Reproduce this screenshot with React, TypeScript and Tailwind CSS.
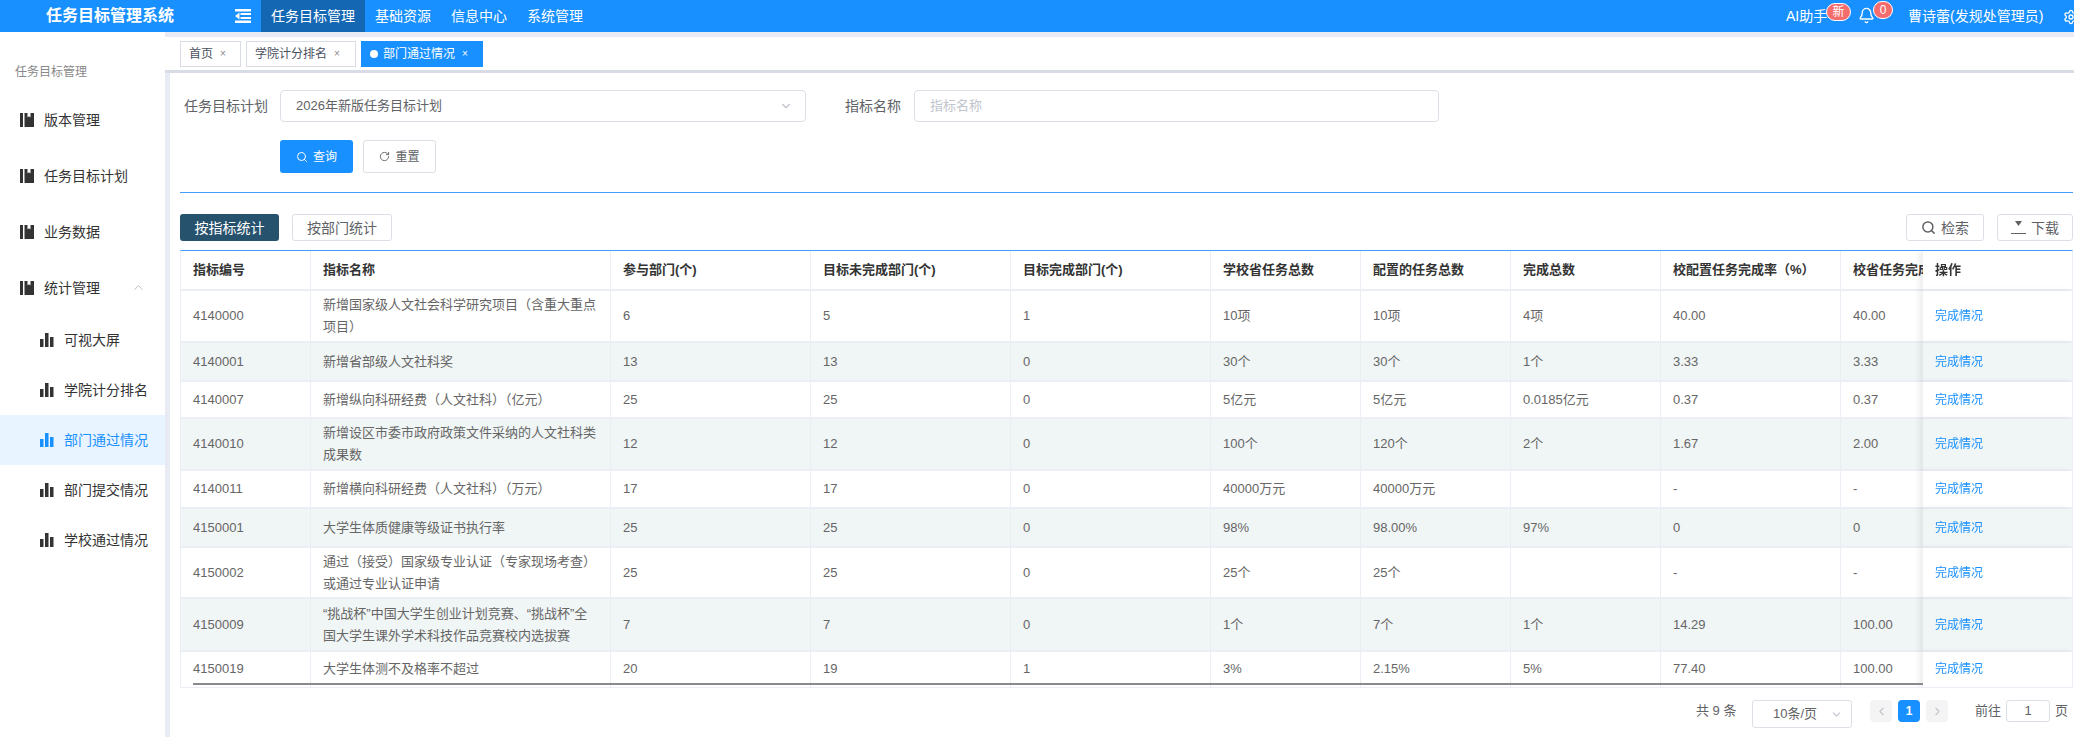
import { Bell, ChevronDown, ChevronLeft, ChevronRight, ChevronUp, RotateCw, Search, Settings } from 'lucide-react';

const TOP_NAV = ['任务目标管理', '基础资源', '信息中心', '系统管理'];

const COLUMNS = [
  { title: '指标编号', width: 'w-[130px]' },
  { title: '指标名称', width: 'w-[300px]' },
  { title: '参与部门(个)', width: 'w-[200px]' },
  { title: '目标未完成部门(个)', width: 'w-[200px]' },
  { title: '目标完成部门(个)', width: 'w-[200px]' },
  { title: '学校省任务总数', width: 'w-[150px]' },
  { title: '配置的任务总数', width: 'w-[150px]' },
  { title: '完成总数', width: 'w-[150px]' },
  { title: '校配置任务完成率（%）', width: 'w-[180px]' },
  { title: '校省任务完成率（%）', width: 'w-[180px]' },
];

const ROWS = [
  { h: 'h-[52px]', cells: ['4140000', '新增国家级人文社会科学研究项目（含重大重点项目）', '6', '5', '1', '10项', '10项', '4项', '40.00', '40.00'] },
  { h: 'h-[39px]', cells: ['4140001', '新增省部级人文社科奖', '13', '13', '0', '30个', '30个', '1个', '3.33', '3.33'] },
  { h: 'h-[37px]', cells: ['4140007', '新增纵向科研经费（人文社科）（亿元）', '25', '25', '0', '5亿元', '5亿元', '0.0185亿元', '0.37', '0.37'] },
  { h: 'h-[52px]', cells: ['4140010', '新增设区市委市政府政策文件采纳的人文社科类成果数', '12', '12', '0', '100个', '120个', '2个', '1.67', '2.00'] },
  { h: 'h-[38px]', cells: ['4140011', '新增横向科研经费（人文社科）（万元）', '17', '17', '0', '40000万元', '40000万元', '', '-', '-'] },
  { h: 'h-[39px]', cells: ['4150001', '大学生体质健康等级证书执行率', '25', '25', '0', '98%', '98.00%', '97%', '0', '0'] },
  { h: 'h-[51px]', cells: ['4150002', '通过（接受）国家级专业认证（专家现场考查）或通过专业认证申请', '25', '25', '0', '25个', '25个', '', '-', '-'] },
  { h: 'h-[53px]', cells: ['4150009', '“挑战杯”中国大学生创业计划竞赛、“挑战杯”全国大学生课外学术科技作品竞赛校内选拔赛', '7', '7', '0', '1个', '7个', '1个', '14.29', '100.00'] },
  { h: 'h-[36px]', cells: ['4150019', '大学生体测不及格率不超过', '20', '19', '1', '3%', '2.15%', '5%', '77.40', '100.00'] },
];

function BookIcon() {
  return (
    <svg width="14" height="14" viewBox="0 0 14 14" className="shrink-0" fill="currentColor">
      <rect x="0" y="0" width="3" height="14" />
      <path d="M4.500 0H7.500V4.500L9 3.200 10.500 4.500V0H14V14H4.500z" />
    </svg>
  );
}

function BarsIcon() {
  return (
    <svg width="14" height="14" viewBox="0 0 14 14" className="shrink-0" fill="currentColor">
      <rect x="0" y="6" width="3.500" height="8" />
      <rect x="5" y="0" width="3.500" height="14" />
      <rect x="10" y="4" width="3.500" height="10" />
    </svg>
  );
}

function MenuIcon() {
  return (
    <svg width="16" height="14" viewBox="0 0 16 14" fill="white" className="shrink-0">
      <rect x="0" y="0" width="16" height="2.500" />
      <rect x="5.500" y="4" width="10.500" height="2" />
      <rect x="5.500" y="8" width="10.500" height="2" />
      <rect x="0" y="11.500" width="16" height="2.500" />
      <path d="M4.500 3.500v7L0 7z" />
    </svg>
  );
}

function Header() {
  return (
    <header className="h-8 bg-[#1890ff] flex items-center text-white text-sm">
      <div className="w-[235px] pl-[46px] text-base font-bold">任务目标管理系统</div>
      <MenuIcon />
      <nav className="flex ml-[10px] h-full">
        {TOP_NAV.map((item, i) => (
          <div key={item} className={`px-[10px] flex items-center ${i === 0 ? 'bg-[#1467b3]' : ''}`}>{item}</div>
        ))}
      </nav>
      <div className="ml-auto flex items-center h-full relative w-[288px]">
        <span>AI助手</span>
        <span className="absolute left-[40px] top-[3px] w-[25px] h-[18px] rounded-[9px] bg-[#f56c6c] border border-white text-xs flex items-center justify-center">新</span>
        <Bell className="absolute left-[72px] top-[7px] w-[17px] h-[17px]" strokeWidth={1.9} />
        <span className="absolute left-[87px] top-[1px] w-[20px] h-[18px] rounded-[9px] bg-[#f56c6c] border border-white text-xs flex items-center justify-center">0</span>
        <span className="absolute left-[122px]">曹诗蕾(发规处管理员)</span>
        <Settings className="absolute left-[277px] top-[9px] w-[16px] h-[16px]" strokeWidth={2} />
      </div>
    </header>
  );
}

function Sidebar() {
  const top = ['版本管理', '任务目标计划', '业务数据'];
  const sub = ['可视大屏', '学院计分排名', '部门通过情况', '部门提交情况', '学校通过情况'];
  return (
    <aside className="w-[165px] shrink-0 bg-white text-sm text-[#333]">
      <div className="h-[60px] pl-[15px] pt-[31px] text-xs text-[#888] leading-[18px]">任务目标管理</div>
      {top.map(item => (
        <div key={item} className="h-[56px] flex items-center pl-[20px] gap-[10px]">
          <BookIcon />
          <span>{item}</span>
        </div>
      ))}
      <div className="h-[55px] flex items-center pl-[20px] gap-[10px]">
        <BookIcon />
        <span>统计管理</span>
        <ChevronUp className="w-[15px] h-[15px] text-[#bbb] ml-[21px]" strokeWidth={1.5} />
      </div>
      {sub.map(item => (
        <div
          key={item}
          className={`h-[50px] flex items-center pl-[40px] gap-[10px] ${item === '部门通过情况' ? 'bg-[#e8f4ff] text-[#1890ff]' : ''}`}
        >
          <BarsIcon />
          <span>{item}</span>
        </div>
      ))}
    </aside>
  );
}

function Tabs() {
  return (
    <div className="h-[33px] mt-[5px] bg-white flex items-center gap-[5px] pl-[15px] shadow-[0_3px_0_#d8dce5] text-xs text-[#495060]">
      <div className="h-[26px] w-[61px] border border-[#d8dce5] flex items-center pl-[8px]">
        首页<span className="ml-[7px] text-[10px] text-[#888]">×</span>
      </div>
      <div className="h-[26px] w-[110px] border border-[#d8dce5] flex items-center pl-[8px]">
        学院计分排名<span className="ml-[7px] text-[10px] text-[#888]">×</span>
      </div>
      <div className="h-[26px] w-[122px] bg-[#1890ff] text-white flex items-center pl-[9px]">
        <span className="w-[8px] h-[8px] rounded-full bg-white mr-[5px]" />
        部门通过情况<span className="ml-[7px] text-[10px]">×</span>
      </div>
    </div>
  );
}

function FilterForm() {
  return (
    <div className="pl-[4px] text-[#606266]">
      <div className="flex items-center h-8">
        <label className="w-[96px] text-sm">任务目标计划</label>
        <div className="w-[526px] h-8 border border-[#dcdfe6] rounded flex items-center pl-[15px] pr-[12px] text-[13px]">
          2026年新版任务目标计划
          <ChevronDown className="ml-auto w-[14px] h-[14px] text-[#c0c4cc]" />
        </div>
        <label className="ml-[39px] w-[69px] text-sm">指标名称</label>
        <div className="w-[525px] h-8 border border-[#dcdfe6] rounded flex items-center pl-[15px] text-[13px] text-[#c0c4cc]">指标名称</div>
      </div>
      <div className="flex gap-[10px] ml-[96px] mt-[18px]">
        <button className="w-[73px] h-[33px] rounded-[3px] bg-[#1890ff] text-white text-xs flex items-center justify-center gap-[5px]">
          <Search className="w-[12px] h-[12px]" />查询
        </button>
        <button className="w-[73px] h-[33px] rounded-[3px] border border-[#dcdfe6] text-xs flex items-center justify-center gap-[5px]">
          <RotateCw className="w-[11px] h-[11px]" />重置
        </button>
      </div>
    </div>
  );
}

function Toolbar() {
  return (
    <div className="flex items-center h-[27px] mt-[21px] text-sm">
      <div className="w-[99px] h-full rounded-[3px] bg-[#27526e] text-white flex items-center justify-center">按指标统计</div>
      <div className="w-[100px] h-full ml-[13px] rounded-[3px] border border-[#dcdfe6] text-[#606266] flex items-center justify-center">按部门统计</div>
      <div className="ml-auto w-[78px] h-full rounded-[3px] border border-[#dcdfe6] text-[#606266] flex items-center justify-center gap-[5px]">
        <Search className="w-[15px] h-[15px]" strokeWidth={2.4} />检索
      </div>
      <div className="ml-[13px] w-[76px] h-full rounded-[3px] border border-[#dcdfe6] text-[#606266] flex items-center justify-center gap-[5px]">
        <svg width="15" height="15" viewBox="0 0 15 15" fill="currentColor">
          <path d="M4 1h7L7.500 6z" />
          <rect x="0" y="13" width="15" height="1" />
        </svg>
        下载
      </div>
    </div>
  );
}

function DataTable() {
  return (
    <div className="relative mt-[9px] border-t border-t-[#409eff] border-b border-r border-l border-[#ebeef5] overflow-hidden text-[13px] leading-[22px] h-[438px]">
      <table className="table-fixed border-separate border-spacing-0 w-[1989px]">
        <colgroup>
          {COLUMNS.map(col => <col key={col.title} className={col.width} />)}
          <col className="w-[149px]" />
        </colgroup>
        <thead>
          <tr className="h-[40px]">
            {COLUMNS.map(col => (
              <th key={col.title} className="px-[12px] text-left font-bold text-[#333] whitespace-nowrap overflow-hidden border-r border-b-2 border-[#ebeef5] bg-white">{col.title}</th>
            ))}
            <th className="sticky right-0 px-[12px] text-left font-bold text-[#333] bg-white border-b-2 border-[#ebeef5] shadow-[-4px_0_6px_rgba(0,0,0,0.07)]">操作</th>
          </tr>
        </thead>
        <tbody>
          {ROWS.map((row, i) => {
            const bg = i % 2 === 1 ? 'bg-[#f0f5f5]' : 'bg-white';
            const isLast = i === ROWS.length - 1;
            const rowEdge = isLast ? 'pb-[3px]' : 'border-b-2 border-[#ebeef5]';
            return (
              <tr key={row.cells[0]} className={row.h}>
                {row.cells.map((cell, j) => (
                  <td key={j} className={`px-[12px] text-[#666] border-r border-r-[#ebeef5] ${rowEdge} ${bg}`}>{cell}</td>
                ))}
                <td className={`sticky right-0 px-[12px] text-xs text-[#1890ff] shadow-[-4px_0_6px_rgba(0,0,0,0.07)] ${rowEdge} ${bg}`}>完成情况</td>
              </tr>
            );
          })}
        </tbody>
      </table>
      <div className="absolute left-[12px] bottom-[2px] w-[1730px] h-[2px] bg-[#8a8a8a]" />
    </div>
  );
}

function Pagination() {
  return (
    <div className="flex items-start h-[28px] mt-[12px] text-[13px] text-[#606266] pl-[1516px]">
      <span className="w-[56px] leading-[22px]">共 9 条</span>
      <div className="w-[100px] h-[28px] border border-[#dcdfe6] rounded-[3px] flex items-center pl-[20px] pr-[8px]">
        10条/页<ChevronDown className="ml-auto w-[13px] h-[13px] text-[#c0c4cc]" />
      </div>
      <div className="ml-[18px] w-[22px] h-[22px] bg-[#f4f4f5] rounded-sm flex items-center justify-center text-[#c0c4cc]"><ChevronLeft className="w-[13px] h-[13px]" /></div>
      <div className="ml-[6px] w-[22px] h-[22px] bg-[#1890ff] rounded-sm flex items-center justify-center text-white font-bold text-xs">1</div>
      <div className="ml-[6px] w-[22px] h-[22px] bg-[#f4f4f5] rounded-sm flex items-center justify-center text-[#c0c4cc]"><ChevronRight className="w-[13px] h-[13px]" /></div>
      <span className="ml-[27px] leading-[22px]">前往</span>
      <div className="ml-[5px] w-[44px] h-[22px] border border-[#dcdfe6] rounded-[3px] flex items-center justify-center">1</div>
      <span className="ml-[5px] leading-[22px]">页</span>
    </div>
  );
}

export default function App() {
  return (
    <div className="w-[2074px] h-[737px] overflow-hidden bg-[#e8ebf3] font-['Liberation_Sans','Noto_Sans_CJK_SC',sans-serif]">
      <Header />
      <div className="flex h-[705px]">
        <Sidebar />
        <main className="flex-1 min-w-0">
          <Tabs />
          <div className="ml-[5px] mt-[3px] h-[664px] bg-white pl-[10px] pt-[17px] pr-[1px]">
            <FilterForm />
            <div className="h-px bg-[#409eff] mt-[19px]" />
            <Toolbar />
            <DataTable />
            <Pagination />
          </div>
        </main>
      </div>
    </div>
  );
}
